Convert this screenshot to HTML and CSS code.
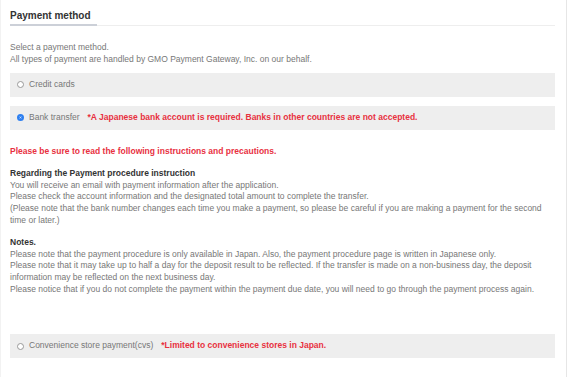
FILE: index.html
```html
<!DOCTYPE html>
<html lang="en">
<head>
    <meta charset="UTF-8">
    <title>Payment method</title>
    <link rel="stylesheet" href="styles.css">
</head>
<body>
    <div class="card">
        <h2 class="card-title"><span>Payment method</span></h2>

        <p class="lead">Select a payment method.<br>All types of payment are handled by GMO Payment Gateway, Inc. on our behalf.</p>

        <label class="option">
            <span class="radio"></span>
            <span class="option-name">Credit cards</span>
        </label>

        <label class="option">
            <span class="radio checked"></span>
            <span class="option-name">Bank transfer</span>
            <span class="option-note">*A Japanese bank account is required. Banks in other countries are not accepted.</span>
        </label>

        <div class="details">
            <p class="warning">Please be sure to read the following instructions and precautions.</p>

            <h3>Regarding the Payment procedure instruction</h3>
            <p>You will receive an email with payment information after the application.<br>
            Please check the account information and the designated total amount to complete the transfer.<br>
            (Please note that the bank number changes each time you make a payment, so please be careful if you are making a payment for the second time or later.)</p>

            <h3>Notes.</h3>
            <p>Please note that the payment procedure is only available in Japan. Also, the payment procedure page is written in Japanese only.<br>
            Please note that it may take up to half a day for the deposit result to be reflected. If the transfer is made on a non-business day, the deposit information may be reflected on the next business day.<br>
            Please notice that if you do not complete the payment within the payment due date, you will need to go through the payment process again.</p>
        </div>

        <label class="option">
            <span class="radio"></span>
            <span class="option-name">Convenience store payment(cvs)</span>
            <span class="option-note">*Limited to convenience stores in Japan.</span>
        </label>
    </div>
</body>
</html>
```

FILE: styles.css
```css
* {
    margin: 0;
    padding: 0;
    box-sizing: border-box;
}

body {
    font-family: "Liberation Sans", Arial, sans-serif;
    font-size: 8.5px;
    line-height: 11.8px;
    color: #777;
    background-color: #fff;
}

.card {
    width: 567px;
    margin-top: -5px;
    padding: 13px 11px 16px 9px;
    border: 1px solid #e6e6e6;
    border-left-color: #f2f2f2;
    border-radius: 4px;
}

/* 見出し */
.card-title {
    font-size: 10px;
    line-height: 14px;
    font-weight: bold;
    color: #333;
    border-bottom: 1px solid #eee;
    margin-bottom: 16px;
}

.card-title span {
    display: inline-block;
    padding: 0 6px 1px 0;
    border-bottom: 2px solid #ccd0d8;
    margin-bottom: -1px;
}

.lead {
    line-height: 11.5px;
    margin-bottom: 7.5px;
}

/* 支払い方法の選択肢 */
.option {
    display: flex;
    align-items: center;
    gap: 5px;
    height: 24px;
    padding-left: 7px;
    margin-bottom: 9px;
    background-color: #eee;
}

.radio {
    width: 7px;
    height: 7px;
    border: 1px solid #999;
    border-radius: 50%;
    background-color: #fff;
}

.radio.checked {
    border: 2px solid #2d7ff0;
    background-color: #fff;
    box-shadow: inset 0 0 0 1px #2d7ff0;
}

.option-note {
    margin-left: 3px;
    color: #e8313f;
    font-weight: bold;
}

/* 注意事項 */
.details {
    padding-top: 7.5px;
    padding-bottom: 28.5px;
}

.warning {
    color: #e8313f;
    font-weight: bold;
    margin-bottom: 10px;
}

.details h3 {
    font-size: 8.5px;
    color: #333;
    font-weight: bold;
}

.details p {
    margin-bottom: 10px;
}
```
